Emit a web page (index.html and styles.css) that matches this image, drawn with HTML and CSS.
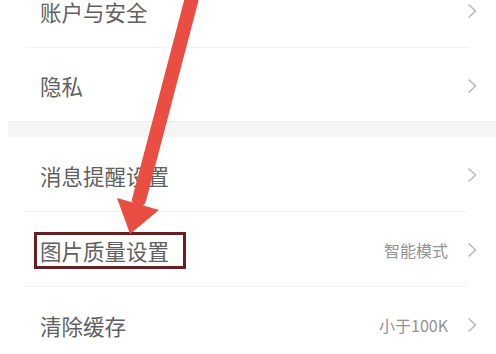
FILE: index.html
```html
<!DOCTYPE html>
<html lang="zh-CN">
<head>
<meta charset="utf-8">
<link rel="stylesheet" href="styles.css">
</head>
<body>
<div class="screen">
  <div class="group first">
    <div class="row"><span class="label">账户与安全</span><span class="chev"><svg viewBox="0 0 10 16"><path d="M1.5 1.5 L8.5 8 L1.5 14.5"/></svg></span></div>
    <div class="divider"></div>
    <div class="row tall"><span class="label">隐私</span><span class="chev"><svg viewBox="0 0 10 16"><path d="M1.5 1.5 L8.5 8 L1.5 14.5"/></svg></span></div>
  </div>
  <div class="band"></div>
  <div class="group">
    <div class="row"><span class="label">消息提醒设置</span><span class="chev"><svg viewBox="0 0 10 16"><path d="M1.5 1.5 L8.5 8 L1.5 14.5"/></svg></span></div>
    <div class="divider"></div>
    <div class="row"><span class="label highlight">图片质量设置</span><span class="value">智能模式</span><span class="chev"><svg viewBox="0 0 10 16"><path d="M1.5 1.5 L8.5 8 L1.5 14.5"/></svg></span></div>
    <div class="divider"></div>
    <div class="row"><span class="label">清除缓存</span><span class="value">小于100K</span><span class="chev"><svg viewBox="0 0 10 16"><path d="M1.5 1.5 L8.5 8 L1.5 14.5"/></svg></span></div>
  </div>
  <svg class="arrow" viewBox="0 0 496 354" width="496" height="354">
    <line x1="193" y1="-6" x2="139" y2="200" stroke="#ea4d42" stroke-width="14" stroke-linecap="round"/>
    <polygon points="117,198 159,210 130,234" fill="#ea4d42"/>
  </svg>
</div>
</body>
</html>
```
FILE: styles.css
```css
html, body {
  margin: 0;
  padding: 0;
  background: #ffffff;
}
body {
  width: 496px;
  height: 354px;
  overflow: hidden;
  font-family: "Noto Sans CJK SC", "Noto Sans", sans-serif;
}
.screen {
  position: relative;
  width: 496px;
  height: 354px;
  overflow: hidden;
}
.group.first {
  margin-top: -27px;
}
.row {
  display: flex;
  align-items: center;
  height: 74px;
  padding: 2px 19px 0 40px;
  box-sizing: border-box;
}
.row.tall {
  height: 73px;
}
.label {
  font-size: 21.5px;
  line-height: 25px;
  color: #606060;
  flex: 1;
}
.label.highlight {
  flex: 0 0 auto;
  margin-left: -6px;
  margin-right: auto;
  padding: 3px 14px 3px 3px;
  border: 3px solid #6b1d22;
}
.value {
  font-size: 16px;
  color: #929292;
  margin-right: 19px;
}
.chev {
  display: flex;
  width: 10px;
  height: 16px;
}
.chev svg {
  width: 10px;
  height: 16px;
  fill: none;
  stroke: #b8b8b8;
  stroke-width: 1.5;
}
.divider {
  height: 1px;
  margin: 0 28px 0 25px;
  background: #f3f3f3;
}
.band {
  height: 16px;
  margin-left: 8px;
  background: #f5f5f5;
  border-top: 1px solid #eeeeee;
  box-sizing: border-box;
}
.arrow {
  position: absolute;
  left: 0;
  top: 0;
}
```
